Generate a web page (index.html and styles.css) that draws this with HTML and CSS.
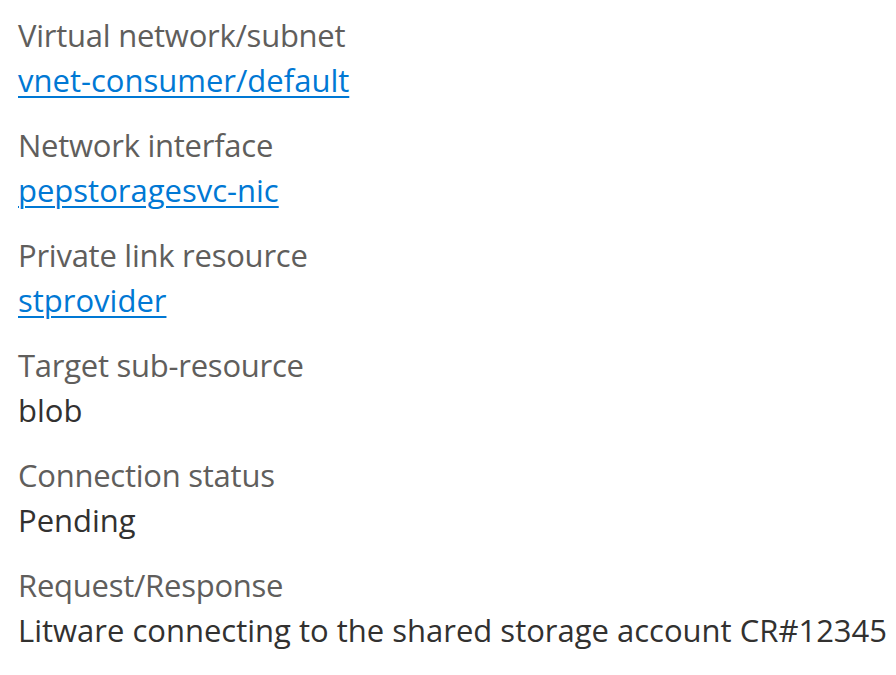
FILE: index.html
```html
<!DOCTYPE html>
<html lang="en">
<head>
<meta charset="utf-8">
<link rel="stylesheet" href="styles.css">
</head>
<body>
<dl class="props">
  <div class="prop">
    <dt class="label">Virtual network/subnet</dt>
    <dd class="value"><a class="link" href="#">vnet-consumer/default</a></dd>
  </div>
  <div class="prop">
    <dt class="label">Network interface</dt>
    <dd class="value"><a class="link" href="#">pepstoragesvc-nic</a></dd>
  </div>
  <div class="prop">
    <dt class="label">Private link resource</dt>
    <dd class="value"><a class="link" href="#">stprovider</a></dd>
  </div>
  <div class="prop">
    <dt class="label">Target sub-resource</dt>
    <dd class="value">blob</dd>
  </div>
  <div class="prop">
    <dt class="label">Connection status</dt>
    <dd class="value">Pending</dd>
  </div>
  <div class="prop">
    <dt class="label">Request/Response</dt>
    <dd class="value">Litware connecting to the shared storage account CR#12345</dd>
  </div>
</dl>
</body>
</html>
```
FILE: styles.css
```css
html, body {
  margin: 0;
  padding: 0;
  background: #ffffff;
}
body {
  font-family: "Open Sans", "Noto Sans", sans-serif;
  font-size: 31px;
  line-height: 45px;
}
.props {
  margin: 0;
  padding: 13px 0 0 18px;
  display: flex;
  flex-direction: column;
  gap: 20px;
}
.prop {
  display: flex;
  flex-direction: column;
}
.label {
  color: #605e5c;
  letter-spacing: -0.25px;
}
.value {
  margin: 0;
  color: #323130;
}
.link {
  color: #0078d4;
  text-decoration: underline;
  text-decoration-thickness: 2px;
  text-underline-offset: 4px;
}
```
